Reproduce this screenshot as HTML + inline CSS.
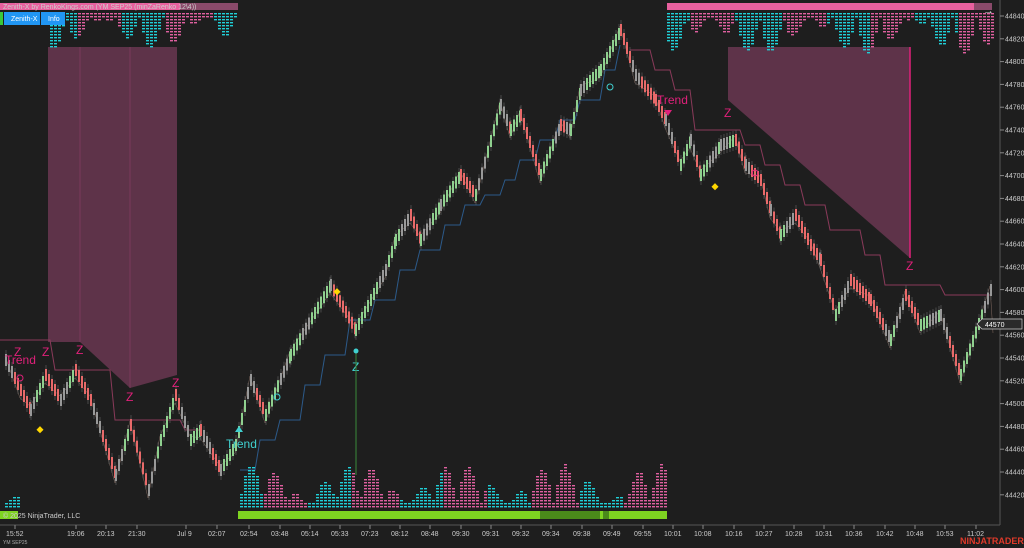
<!DOCTYPE html><html><head><meta charset="utf-8"><style>
body{margin:0;background:#1e1e1e;width:1024px;height:548px;overflow:hidden;font-family:"Liberation Sans",sans-serif}
svg{position:absolute;left:0;top:0}
.t{font-size:7px;fill:#ccc}
</style></head><body>
<svg id="s" width="1024" height="548" xmlns="http://www.w3.org/2000/svg">
<rect width="1024" height="548" fill="#1e1e1e"/>
<line x1="1000" y1="0" x2="1000" y2="525" stroke="#555"/>
<line x1="0" y1="525" x2="1000" y2="525" stroke="#555"/>
<polygon points="48,47 177,47 177,375 130,388 80,342 48,342" fill="#5e3349"/>
<line x1="80" y1="47" x2="80" y2="342" stroke="#7a3a5a"/><line x1="130" y1="47" x2="130" y2="388" stroke="#7a3a5a"/>
<polygon points="728,47 910,47 910,258 728,100" fill="#5e3349"/>
<line x1="910" y1="47" x2="910" y2="258" stroke="#e0207a" stroke-width="1.5"/>
<g id="lines" fill="none"></g>
<g id="bricks"></g>
<g id="vol"></g>
<rect x="0" y="3" width="180" height="7" fill="#e8609e"/><rect x="180" y="3" width="58" height="7" fill="#8a4a6a"/>
<rect x="667" y="3" width="307" height="7" fill="#e8609e"/><rect x="974" y="3" width="18" height="7" fill="#8a4a6a"/>
<text x="3" y="9" class="t" fill="#ddd">Zenith-X by RenkoKings.com (YM SEP25 (minZaRenko 12\4))</text>
<text x="983" y="14" fill="#ddd" font-size="11">→</text>
<rect x="0" y="12" width="3" height="13" fill="#3ac83a"/>
<rect x="4" y="12" width="36" height="13" fill="#2196f3"/><text x="11" y="21" class="t" style="fill:#fff">Zenith-X</text>
<rect x="41" y="12" width="24" height="13" fill="#2196f3"/><text x="48" y="21" class="t" style="fill:#fff">Info</text>
<rect x="238" y="511" width="429" height="8" fill="#7ed321"/>
<rect x="540" y="511" width="60" height="8" fill="#4a8a1a"/><rect x="603" y="511" width="6" height="8" fill="#4a8a1a"/>
<rect x="0" y="511" width="18" height="8" fill="#7ed321"/>
<text x="3" y="518" class="t">© 2025 NinjaTrader, LLC</text>
<text x="3" y="544" font-size="5" fill="#aaa">YM SEP25</text>
<text x="960" y="544" font-size="9" font-weight="bold" fill="#e03a2a">NINJATRADER</text>
<g font-size="12" fill="#e0207a">
<text x="5" y="364">Trend</text><text x="14" y="356">Z</text><text x="42" y="356">Z</text><text x="76" y="354">Z</text><text x="126" y="401">Z</text><text x="172" y="387">Z</text><text x="657" y="104">Trend</text><text x="724" y="117">Z</text><text x="906" y="270">Z</text>
</g>
<g font-size="12" fill="#40d0d0"><text x="226" y="448">Trend</text><text x="352" y="371">Z</text></g>
<line x1="356" y1="352" x2="356" y2="475" stroke="#3a8a3a"/>
<circle cx="356" cy="351" r="2.5" fill="#40d0d0"/>
<g fill="#ffd700"><rect x="38" y="427" width="5" height="5" transform="rotate(45 40 429)"/><rect x="335" y="289" width="5" height="5" transform="rotate(45 337 291)"/><rect x="713" y="184" width="5" height="5" transform="rotate(45 715 186)"/></g>
<g fill="none" stroke="#40d0d0"><circle cx="277" cy="397" r="3"/><circle cx="610" cy="87" r="3"/></g>
<g fill="none" stroke="#e0207a"><circle cx="20" cy="378" r="3"/><circle cx="755" cy="173" r="3"/></g>
<polygon points="235,432 243,432 239,426" fill="#40d0d0"/>
<polygon points="664,110 672,110 668,116" fill="#e0207a"/>
<g id="ax"></g>
<polygon points="977,324 982,319 1022,319 1022,329 982,329" fill="#2a2a2a" stroke="#ccc" stroke-width="0.7"/>
<text x="985" y="327" class="t" style="fill:#fff">44570</text>
</svg>
<script>
var NS="http://www.w3.org/2000/svg";
function el(p,t,a){var e=document.createElementNS(NS,t);for(var k in a)e.setAttribute(k,a[k]);document.getElementById(p).appendChild(e);return e;}
var W=[[5,360],[20,390],[30,410],[45,375],[60,400],[75,370],[90,400],[115,475],[130,425],[148,490],[160,440],[175,395],[190,440],[200,430],[220,470],[235,445],[250,380],[265,415],[290,355],[330,285],[355,330],[385,270],[395,240],[410,215],[420,240],[440,205],[460,175],[475,195],[500,105],[510,130],[520,115],[540,175],[560,125],[570,130],[580,90],[600,70],[620,30],[635,75],[655,100],[665,120],[680,165],[690,140],[700,175],[720,145],[735,140],[745,165],[760,180],[770,210],[780,235],[795,215],[810,245],[820,260],[835,315],[850,280],[870,300],[890,340],[905,295],[920,325],[940,315],[960,375],[990,290],[993,325]];
for(var i=0;i<W.length-1;i++){var a=W[i],b=W[i+1],up=b[1]<a[1];
 for(var x=a[0];x<b[0];x+=3){var y=a[1]+(b[1]-a[1])*(x-a[0])/(b[0]-a[0]);
  var c=up?"#8fd08f":"#e86a6a"; if((x*7)%11<3)c="#999";
  el("bricks","line",{x1:x+1,y1:y-10,x2:x+1,y2:y+10,stroke:"#666","stroke-width":0.6});
  el("bricks","rect",{x:x,y:y-6,width:2,height:12,fill:c});}}
var p="";W.forEach(function(w,i){p+=(i?"L":"M")+w[0]+","+(w[1]+(i%2?8:-4));});
el("lines","path",{d:p,stroke:"#c8a090","stroke-width":0.5,opacity:0.6});
el("lines","path",{d:"M240,470 L255,470 L260,440 L275,440 L280,420 L300,420 L305,385 L320,385 L325,355 L345,355 L350,320 L370,320 L375,300 L395,300 L400,270 L415,270 L420,250 L440,250 L445,225 L460,225 L465,205 L480,205 L485,195 L500,195 L505,180 L515,180 L520,160 L535,160 L540,140 L555,140 L560,120 L575,120 L580,100 L600,100 L605,70 L615,70 L620,45",stroke:"#2c5a8a","stroke-width":1});
el("lines","path",{d:"M630,50 L650,50 L655,70 L670,70 L675,90 L690,90 L695,130 L740,130 L745,145 L760,145 L765,165 L780,165 L785,185 L800,185 L805,205 L825,205 L830,230 L860,230 L865,255 L880,255 L885,285 L940,285 L945,295 L990,295",stroke:"#8a3a5a","stroke-width":1});
el("lines","path",{d:"M0,340 L50,340 L55,370 L110,370 L115,420 L180,420 L185,430 L200,430",stroke:"#8a3a5a","stroke-width":1});
for(var v=44840,k=0;v>=44420;v-=20,k++){var y=16+k*22.8;el("ax","line",{x1:1000,y1:y,x2:1004,y2:y,stroke:"#888"});var t=el("ax","text",{x:1005,y:y+2.5,"class":"t"});t.textContent=v;}
var T=[[15,"15:52"],[76,"19:06"],[106,"20:13"],[137,"21:30"],[186,"Jul 9"],[217,"02:07"],[249,"02:54"],[280,"03:48"],[310,"05:14"],[340,"05:33"],[370,"07:23"],[400,"08:12"],[430,"08:48"],[461,"09:30"],[491,"09:31"],[521,"09:32"],[551,"09:34"],[582,"09:38"],[612,"09:49"],[643,"09:55"],[673,"10:01"],[703,"10:08"],[734,"10:16"],[764,"10:27"],[794,"10:28"],[824,"10:31"],[854,"10:36"],[885,"10:42"],[915,"10:48"],[945,"10:53"],[976,"11:02"]];
T.forEach(function(a){el("ax","line",{x1:a[0],y1:525,x2:a[0],y2:529,stroke:"#888"});var t=el("ax","text",{x:a[0]-9,y:536,"class":"t"});t.textContent=a[1];});
function hist(x0,x1,yb,dir,seed,sc){for(var x=x0;x<x1;x+=4){var h=Math.abs(Math.sin(x*0.13+seed)*Math.sin(x*0.031))*sc+3;var c=(Math.sin(x*0.07+seed)>0)?"#e060a0":"#20d0d8";
 for(var j=0;j<h;j+=3){el("vol","rect",{x:x,y:dir>0?yb+j:yb-j-2,width:3,height:1.4,fill:c});}}}
hist(50,238,13,1,1,32);hist(667,995,13,1,2,38);hist(240,667,508,-1,0.5,40);hist(5,18,508,-1,3,20);
</script>
</body></html>
